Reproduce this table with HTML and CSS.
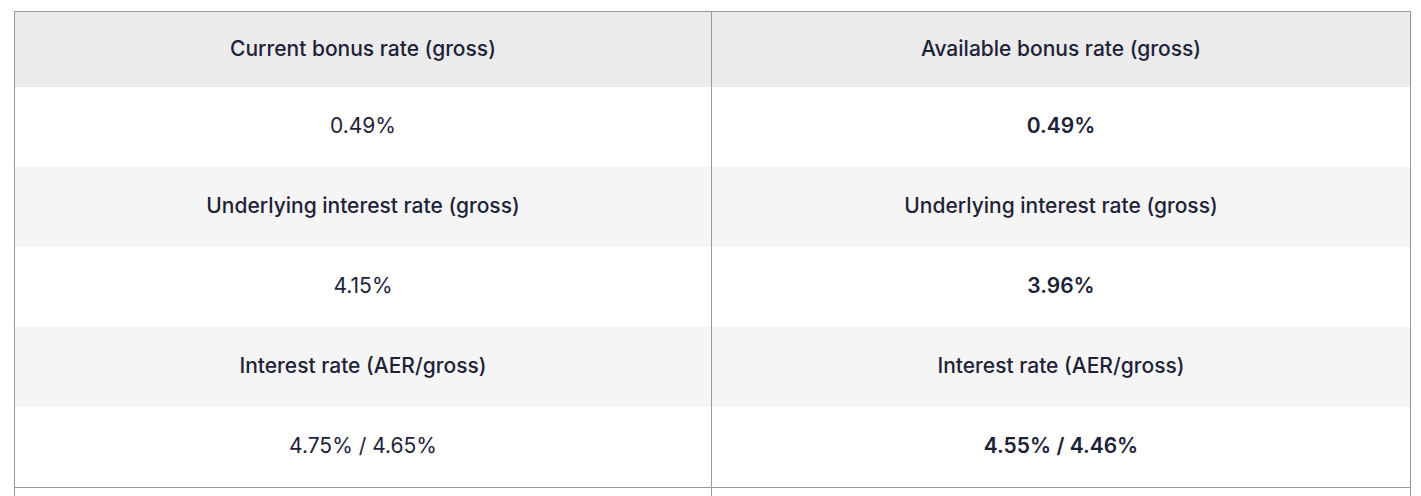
FILE: index.html
```html
<!DOCTYPE html>
<html>
<head>
<meta charset="utf-8">
<link rel="stylesheet" href="styles.css">
</head>
<body>
<div class="wrap">
<table class="rates">
  <colgroup><col class="c1"><col class="c2"></colgroup>
  <tr class="head"><th>Current bonus rate (gross)</th><th>Available bonus rate (gross)</th></tr>
  <tr class="val"><td>0.49%</td><td class="strong">0.49%</td></tr>
  <tr class="sub"><td>Underlying interest rate (gross)</td><td>Underlying interest rate (gross)</td></tr>
  <tr class="val"><td>4.15%</td><td class="strong">3.96%</td></tr>
  <tr class="sub"><td>Interest rate (AER/gross)</td><td>Interest rate (AER/gross)</td></tr>
  <tr class="val last"><td>4.75% / 4.65%</td><td class="strong">4.55% / 4.46%</td></tr>
  <tr class="val"><td>&nbsp;</td><td>&nbsp;</td></tr>
</table>
</div>
</body>
</html>
```
FILE: styles.css
```css
html, body { margin: 0; padding: 0; background: #fff; }
body { font-family: Inter, "Noto Sans", sans-serif; color: #1e2238; }
.wrap { padding: 11px 0 0 14px; }
.rates { width: 1396px; border-collapse: collapse; border: 1px solid #999; table-layout: fixed; }
.c1 { width: 697px; }
.c2 { width: 699px; }
.rates th, .rates td { border-left: 1px solid #999; border-right: 1px solid #999; text-align: center; font-size: 21px; line-height: 24px; padding: 0 0 2px 0; }
.rates th { height: 73px; background: #ebebeb; font-weight: 500; }
.val td { height: 78px; background: #fff; font-weight: 400; }
.sub td { height: 78px; background: #f5f5f5; font-weight: 500; }
.val td.strong { font-weight: 600; }
.last td { border-bottom: 1px solid #999; }
```
